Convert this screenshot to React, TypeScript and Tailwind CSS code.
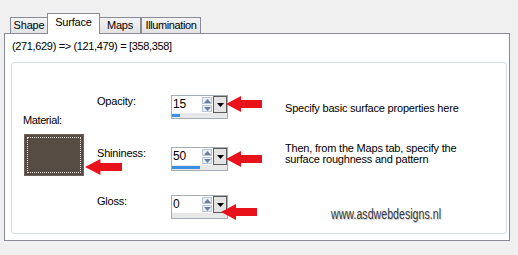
import React from 'react';

const Arrow = ({ className }: { className: string }) => (
  <svg className={`absolute ${className}`} viewBox="0 0 36 16" preserveAspectRatio="none">
    <polygon points="0,8 15,0 15,4 36,4 36,12 15,12 15,16" fill="#e8121b" />
  </svg>
);

function Spin({ value }: { value: number }) {
  return (
    <div className="w-[57px] h-[24px] border border-[#a5acb5] bg-white flex flex-col">
      <div className="flex h-[17px]">
        <div className="flex-1 pl-[1px] pt-[1px] text-[12px] leading-[15px] text-black">{value}</div>
        <div className="w-[11px] flex flex-col gap-[1px] py-[1px] pr-[1px]">
          <div className="flex-1 border border-[#b9c6d6] bg-[#e8eef5] flex items-center justify-center">
            <svg width="7" height="4" viewBox="0 0 7 4">
              <polygon points="0,4 7,4 3.5,0" fill="#6a7d9c" />
            </svg>
          </div>
          <div className="flex-1 border border-[#b9c6d6] bg-[#e8eef5] flex items-center justify-center">
            <svg width="7" height="4" viewBox="0 0 7 4">
              <polygon points="0,0 7,0 3.5,4" fill="#6a7d9c" />
            </svg>
          </div>
        </div>
        <div className="w-[14px] border border-[#5c5c5c] bg-[#e4e4e4] flex items-center justify-center">
          <svg width="7" height="4" viewBox="0 0 7 4">
            <polygon points="0,0 7,0 3.5,4" fill="#000" />
          </svg>
        </div>
      </div>
      <div className="flex-1 bg-[#e8e8e8] pt-[1px]">
        <div className="h-[3px] bg-[#3d8fe2]" style={{ width: `${value}%` }} />
      </div>
    </div>
  );
}

function Tab({ label, active, className }: { label: string; active?: boolean; className: string }) {
  return (
    <div
      className={`${className} border border-[#898c95] text-black flex justify-center ${
        active
          ? 'h-[21px] bg-white border-b-0 pt-[2px] relative z-10'
          : 'h-[17px] bg-gradient-to-b from-[#f4f4f4] to-[#e2e2e2] pt-[1px]'
      }`}
    >
      {label}
    </div>
  );
}

export default function App() {
  return (
    <div className="relative w-[518px] h-[255px] bg-[#f0f0f0] pt-[13px] pl-[4px] font-['Liberation_Sans',Arial,sans-serif] text-[11px] leading-[13px] tracking-[-0.2px] overflow-hidden">
      {/* tab strip */}
      <div className="flex items-end h-[21px] -mb-[1px] pl-[6px] relative z-10">
        <Tab label="Shape" className="w-[38px]" />
        <Tab label="Surface" active className="w-[53px] -ml-[1px]" />
        <Tab label="Maps" className="w-[42px] -ml-[1px]" />
        <Tab label="Illumination" className="w-[60px] tracking-[-0.4px]" />
      </div>

      {/* tab page */}
      <div className="w-[506px] h-[208px] border border-[#898c95] bg-white pl-[7px] pt-[6px]">
        <div className="tracking-[-0.35px] text-black">(271,629) =&gt; (121,479) = [358,358]</div>

        {/* group box */}
        <div className="mt-[9px] -ml-[1px] w-[496px] h-[172px] border border-[#d5dfe5] rounded-[3px] flex text-black">
          <div className="w-[85px] pl-[11px] pt-[51px] shrink-0">
            <div className="tracking-[-0.4px]">Material:</div>
            <div className="mt-[7px] ml-[1px] w-[60px] h-[42px] bg-[#574c44] border border-[#6b625b] p-[2px]">
              <div className="w-full h-full border border-dotted border-[#e8e4e0]" />
            </div>
          </div>

          <div className="flex flex-col pt-[32px]">
            <div className="flex">
              <div className="w-[74px]">Opacity:</div>
              <Spin value={15} />
              <div className="ml-[57px] pt-[7px]">Specify basic surface properties here</div>
            </div>
            <div className="flex mt-[28px]">
              <div className="w-[74px]">Shininess:</div>
              <Spin value={50} />
              <div className="ml-[57px] -mt-[4px] leading-[11px]">
                Then, from the Maps tab, specify the
                <br />
                surface roughness and pattern
              </div>
            </div>
            <div className="flex mt-[24px]">
              <div className="w-[74px]">Gloss:</div>
              <Spin value={0} />
              <div className="ml-[103px] pt-[11px]">
                <span className="inline-block origin-left scale-x-[0.76] text-[14px] leading-[16px] text-[#383838] tracking-normal [text-shadow:1px_1px_1px_#c4c4c4]">
                  www.asdwebdesigns.nl
                </span>
              </div>
            </div>
          </div>
        </div>
      </div>

      {/* annotation arrows */}
      <Arrow className="left-[92px] top-[17px] w-[36px] h-[15px]" />
      <Arrow className="left-[226px] top-[96px] w-[36px] h-[16px]" />
      <Arrow className="left-[226px] top-[151px] w-[36px] h-[16px]" />
      <Arrow className="left-[221px] top-[204px] w-[36px] h-[16px]" />
      <Arrow className="left-[85px] top-[159px] w-[37px] h-[16px]" />
    </div>
  );
}
